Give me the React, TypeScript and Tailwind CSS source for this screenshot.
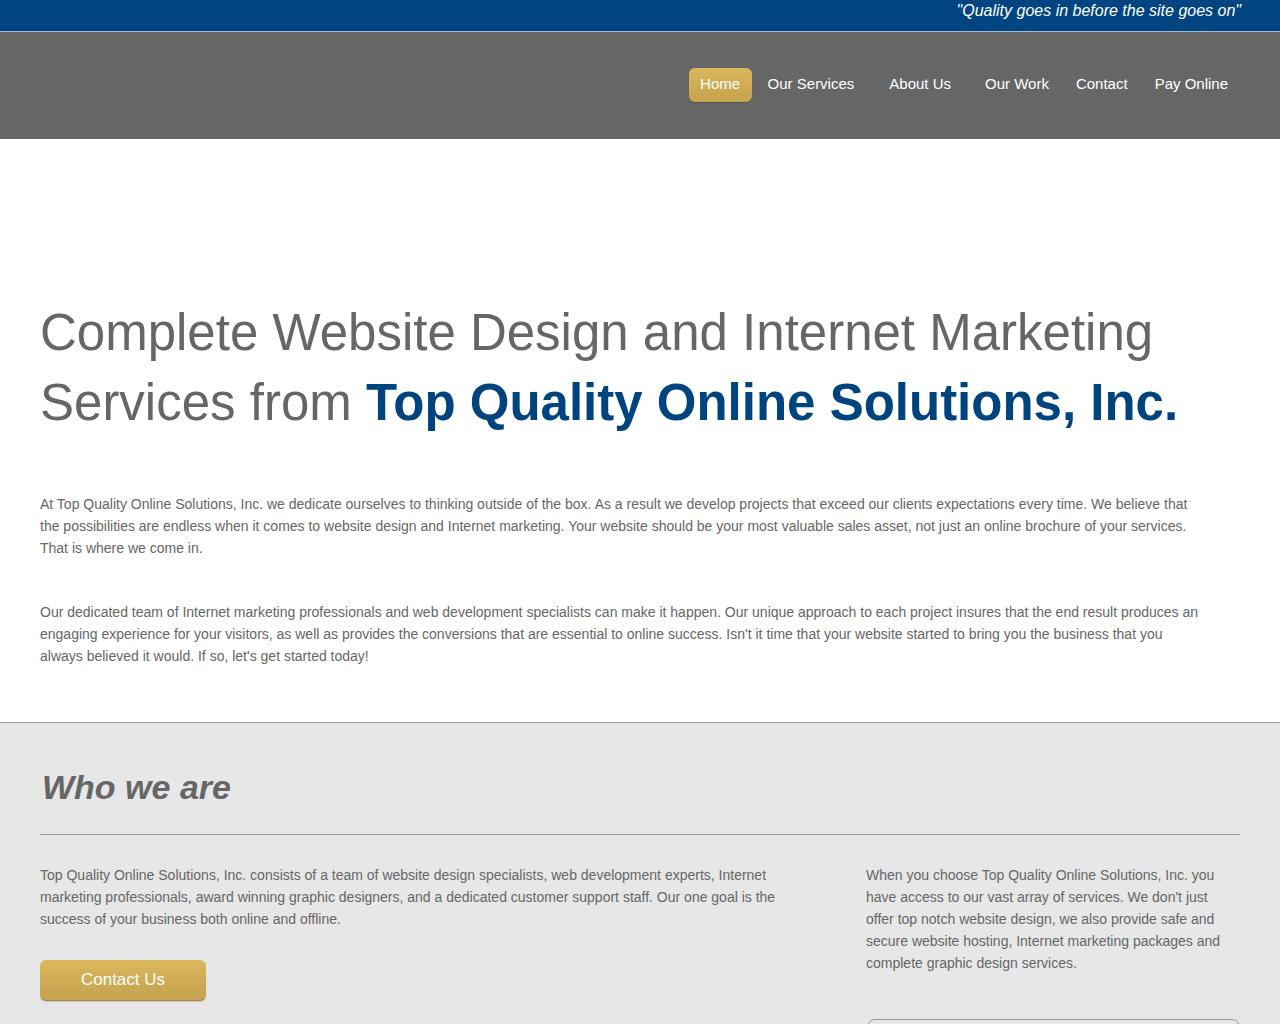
import React from "react";

const font = { fontFamily: '"Liberation Sans", Arial, sans-serif' };

export default function App() {
  return (
    <div className="min-h-[1024px] bg-white" style={font}>
      {/* Top tagline bar */}
      <div className="h-[32px] bg-[#004481] border-b border-[#a7b8cb]">
        <div className="px-[39px] flex justify-end">
          <p className="text-white italic text-[16px] leading-[22px]">
            "Quality goes in before the site goes on"
          </p>
        </div>
      </div>

      {/* Nav */}
      <div className="h-[107px] bg-[#666666] flex items-center justify-end pr-[41px] pb-[2px]">
        <nav className="flex items-center text-[15px] text-white">
          <a className="h-[34px] w-[63px] flex items-center justify-center rounded-[6px] bg-gradient-to-b from-[#dbb75c] to-[#c4a24f] shadow-[0_1px_1px_rgba(0,0,0,0.2)]">
            Home
          </a>
          <a className="h-[34px] flex items-center px-[11px] ml-[5px]">Our Services</a>
          <a className="h-[34px] flex items-center px-[11px] ml-[13px]">About Us</a>
          <a className="h-[34px] flex items-center px-[11px] ml-[12px]">Our Work</a>
          <a className="h-[34px] flex items-center px-[11px] ml-[5px]">Contact</a>
          <a className="h-[34px] flex items-center px-[11px] ml-[5px]">Pay Online</a>
        </nav>
      </div>

      {/* Intro */}
      <section className="px-[40px] pt-[159px] pb-[55px]">
        <h1 className="text-[51px] leading-[70px] text-[#666666] font-normal">
          Complete Website Design and Internet Marketing
          <br />
          Services from{" "}
          <span className="font-bold text-[#00447f]">Top Quality Online Solutions, Inc.</span>
        </h1>
        <p className="mt-[55px] text-[14px] leading-[22px] text-[#666666] max-w-[1162px]">
          At Top Quality Online Solutions, Inc. we dedicate ourselves to thinking outside of the box. As a result we develop projects that exceed our clients expectations every time. We believe that the possibilities are endless when it comes to website design and Internet marketing. Your website should be your most valuable sales asset, not just an online brochure of your services. That is where we come in.
        </p>
        <p className="mt-[42px] text-[14px] leading-[22px] text-[#666666] max-w-[1162px]">
          Our dedicated team of Internet marketing professionals and web development specialists can make it happen. Our unique approach to each project insures that the end result produces an engaging experience for your visitors, as well as provides the conversions that are essential to online success. Isn't it time that your website started to bring you the business that you always believed it would. If so, let's get started today!
        </p>
      </section>

      {/* Who we are */}
      <section className="bg-[#e7e7e7] border-t border-[#999999] px-[40px] pt-[44px] pb-[40px]">
        <h2 className="text-[34px] leading-[40px] font-bold italic text-[#666666] pl-[2px]">
          Who we are
        </h2>
        <div className="mt-[27px] h-px bg-[#999999]" />
        <div className="mt-[29px] flex justify-between">
          <div className="w-[760px]">
            <p className="text-[14px] leading-[22px] text-[#666666]">
              Top Quality Online Solutions, Inc. consists of a team of website design specialists, web development experts, Internet marketing professionals, award winning graphic designers, and a dedicated customer support staff. Our one goal is the success of your business both online and offline.
            </p>
            <button className="mt-[30px] w-[166px] h-[41px] rounded-[6px] bg-gradient-to-b from-[#dbb75c] to-[#c4a24f] text-white text-[17px] border-b border-[#a88a3e] shadow-[0_1px_1px_rgba(0,0,0,0.15)]">
              Contact Us
            </button>
          </div>
          <div className="w-[374px]">
            <p className="text-[14px] leading-[22px] text-[#666666] max-w-[360px]">
              When you choose Top Quality Online Solutions, Inc. you have access to our vast array of services. We don't just offer top notch website design, we also provide safe and secure website hosting, Internet marketing packages and complete graphic design services.
            </p>
            <div className="mt-[45px] ml-px h-[80px] rounded-[8px] border border-[#999999]" />
          </div>
        </div>
      </section>
    </div>
  );
}
